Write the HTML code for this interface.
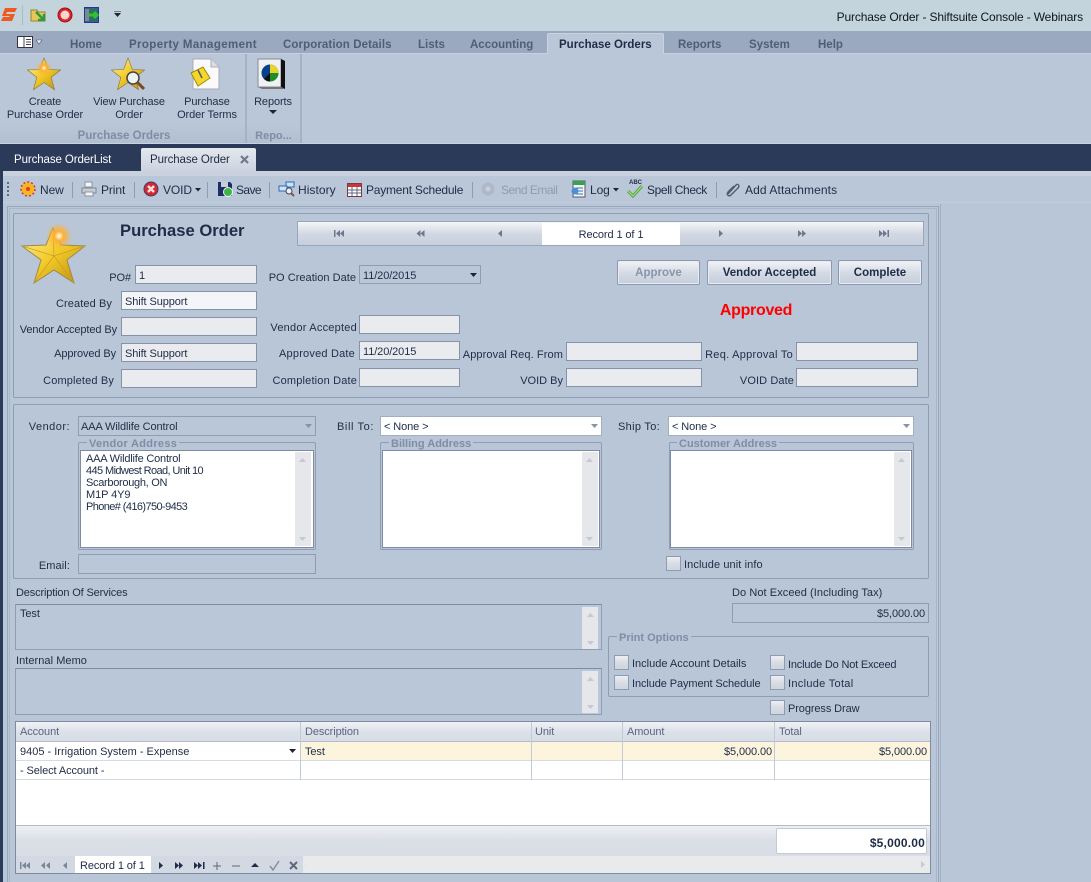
<!DOCTYPE html>
<html><head><meta charset="utf-8"><style>
html,body{margin:0;padding:0;width:1091px;height:882px;overflow:hidden;background:#b9c6d7}
body{position:relative;font:11px "Liberation Sans",sans-serif;letter-spacing:-.1px;color:#1f2c47}
div,span,svg{position:absolute;box-sizing:border-box}
.t{white-space:nowrap;line-height:14px;height:14px;margin-top:1px}
.r{text-align:right}.c{text-align:center}
.b{font-weight:bold}
.tb{color:#4f5d76;font-weight:bold;font-size:11.5px;letter-spacing:0}
.f{background:#e9ebef;border:1px solid #8592a8;padding:4px 3px 0;line-height:13px;white-space:nowrap}
.n{background:#bac7d8;border:1px solid #8f9cb2;padding:4px 3px 0;line-height:13px;white-space:nowrap}
.w{background:#fff;border:1px solid #a3aec0;padding:4px 3px 0;line-height:13px;white-space:nowrap}
.g{border:1px solid #8f9db3;border-radius:2px}
.cb{width:15px;height:15px;border:1px solid #8f9bb0;background:linear-gradient(#eceef2,#d9dde4 50%,#cfd5de)}
.btn{border:1px solid #8d99ae;border-radius:2px;background:linear-gradient(#f2f4f7,#d5dbe5 50%,#c5cedb);box-shadow:inset 0 0 0 1px #e8ecf1;text-align:center;font-weight:bold;font-size:11.5px;line-height:25px;letter-spacing:0}
.sb{background:#e5e7ea;width:16px}
.ga{font-weight:bold;color:#7f8ca5;background:#b9c6d7;padding:0 2px;letter-spacing:0}
.ln{background:#d7dbe5;width:1px}
.sep{width:1px;height:16px;top:182px;background:#8f9cb2}
.th{color:#5a6680;top:724px}
.rl{font-size:11px;letter-spacing:-.1px}
.tl{margin-top:0;font-size:12px}
</style></head><body>
<svg width="0" height="0" style="left:0;top:0"><defs>
<linearGradient id="st" x1="0" y1="0" x2="1" y2="1"><stop offset="0" stop-color="#fff2a0"/><stop offset=".5" stop-color="#f2c928"/><stop offset="1" stop-color="#b98c12"/></linearGradient>
<radialGradient id="gl"><stop offset="0" stop-color="#fff"/><stop offset=".35" stop-color="#ffb030"/><stop offset="1" stop-color="#ffb030" stop-opacity="0"/></radialGradient>
<symbol id="star" viewBox="0 0 100 100"><polygon points="50,3 63,37 99,38 71,60 81,96 50,75 19,96 29,60 1,38 37,37" fill="url(#st)" stroke="#8c7a3a" stroke-width="2"/></symbol>
</defs></svg>

<!-- title bar -->
<div style="left:0;top:0;width:1091px;height:31px;background:#c3d4dc"></div>
<svg style="left:1px;top:7px" width="16" height="16" viewBox="0 0 16 16"><path d="M4 1H16L14 5H6L5 7H14L11 14H0L2 10H8L9 9H1Z" fill="#ee5a22"/></svg>
<div style="left:22px;top:6px;width:1px;height:19px;background:#a9bac4"></div>
<svg style="left:30px;top:7px" width="18" height="16" viewBox="0 0 18 16"><path d="M1 3H7L8 5H15V14H1Z" fill="#e8c65a" stroke="#9c8030"/><path d="M6 5L14 13M14 7V13H8" fill="none" stroke="#2f9a3a" stroke-width="2.500"/></svg>
<svg style="left:57px;top:7px" width="16" height="16" viewBox="0 0 16 16"><circle cx="8" cy="8" r="7" fill="#d22" stroke="#912"/><circle cx="8" cy="8" r="4.500" fill="#f4d8d0"/></svg>
<svg style="left:84px;top:7px" width="15" height="16" viewBox="0 0 15 16"><rect x=".5" y=".5" width="14" height="15" fill="#2f6b68" stroke="#2333a0"/><rect x="1" y="2" width="4" height="12" fill="#7a8a90"/><path d="M5 8H13M10 5L13 8L10 11" fill="none" stroke="#2ec22e" stroke-width="3"/></svg>
<svg style="left:113px;top:11px" width="9" height="7" viewBox="0 0 9 7"><path d="M1 0H8" stroke="#223"/><path d="M1 2H8L4.500 6Z" fill="#223"/></svg>
<div class="t r" style="right:8px;top:9px;color:#10151f;font-size:12px;letter-spacing:-.15px">Purchase Order - Shiftsuite Console - Webinars</div>

<!-- ribbon tabs -->
<div style="left:0;top:31px;width:1091px;height:22px;background:#9aa9c0"></div>
<div style="left:0;top:53px;width:1091px;height:1px;background:#c6d0de"></div>
<svg style="left:17px;top:36px" width="26" height="13" viewBox="0 0 26 13"><rect x=".5" y=".5" width="15" height="11" fill="#fff" stroke="#334"/><path d="M7 1V11M9 3.500H14M9 6H14M9 8.500H14" stroke="#445" fill="none"/><path d="M19 4H25L22 8Z" fill="#eef" stroke="#556" stroke-width=".6"/></svg>
<div class="t tb" style="left:70px;top:37px">Home</div>
<div class="t tb" style="left:129px;top:37px;letter-spacing:.38px">Property Management</div>
<div class="t tb" style="left:283px;top:37px;letter-spacing:.1px">Corporation Details</div>
<div class="t tb" style="left:418px;top:37px">Lists</div>
<div class="t tb" style="left:470px;top:37px">Accounting</div>
<div style="left:547px;top:33px;width:117px;height:21px;background:#bac7d8;border:1px solid #c8d2e0;border-bottom:0;border-radius:2px 2px 0 0"></div>
<div class="t tb" style="left:559px;top:37px;color:#1f2c47">Purchase Orders</div>
<div class="t tb" style="left:678px;top:37px">Reports</div>
<div class="t tb" style="left:749px;top:37px">System</div>
<div class="t tb" style="left:818px;top:37px">Help</div>

<!-- ribbon -->
<div style="left:0;top:54px;width:1091px;height:89px;background:#bac7d8"></div>
<div style="left:0;top:126px;width:245px;height:17px;background:linear-gradient(#b9c6d7,#b1bfd1)"></div>
<div style="left:247px;top:126px;width:53px;height:17px;background:linear-gradient(#b9c6d7,#b1bfd1)"></div>
<div style="left:245px;top:54px;width:2px;height:89px;background:#a5b2c6"></div>
<div style="left:300px;top:54px;width:2px;height:89px;background:#a5b2c6"></div>
<svg style="left:27px;top:57px" width="34" height="34"><use href="#star" width="34" height="34"/><circle cx="17" cy="11" r="8" fill="url(#gl)"/></svg>
<svg style="left:111px;top:57px" width="34" height="34"><use href="#star" width="34" height="34"/><circle cx="22" cy="21" r="6" fill="#eef3f3" stroke="#444" stroke-width="1.500"/><path d="M26 25L33 32" stroke="#7a4a20" stroke-width="3"/></svg>
<svg style="left:190px;top:58px" width="30" height="33" viewBox="0 0 30 33"><path d="M3 1H21L29 9V31H3Z" fill="#fafafa" stroke="#aab"/><path d="M21 1V9H29" fill="#ddd" stroke="#aab"/><path d="M1 15L13 9L20 20L8 28Z" fill="#f4d728" stroke="#a08a10"/><path d="M8 12L12 20" stroke="#556" fill="none" stroke-width="1.500"/></svg>
<svg style="left:257px;top:58px" width="30" height="33" viewBox="0 0 30 33"><path d="M1 1H24V29H1Z" fill="#eef2f0" stroke="#889"/><path d="M24 1L28 3V31L24 29Z" fill="#111"/><path d="M1 29L5 31H28L24 29Z" fill="#777"/><circle cx="13" cy="15" r="8.500" fill="#0a3f8c"/><path d="M13 15V6.500A8.500 8.500 0 0 1 21.500 15Z" fill="#e7d428"/><path d="M13 15H21.500A8.500 8.500 0 0 1 13 23.500Z" fill="#1d8e2a"/><path d="M13 15V23.500A8.500 8.500 0 0 1 7 21Z" fill="#111"/></svg>
<div class="t c" style="left:0;top:94px;width:90px">Create</div>
<div class="t c" style="left:0;top:107px;width:90px">Purchase Order</div>
<div class="t c" style="left:84px;top:94px;width:90px">View Purchase</div>
<div class="t c" style="left:84px;top:107px;width:90px">Order</div>
<div class="t c" style="left:162px;top:94px;width:90px">Purchase</div>
<div class="t c" style="left:162px;top:107px;width:90px">Order Terms</div>
<div class="t c" style="left:248px;top:94px;width:50px">Reports</div>
<svg style="left:269px;top:110px" width="8" height="5"><path d="M0 0H8L4 4Z" fill="#223"/></svg>
<div class="t c b" style="left:0;top:128px;width:248px;color:#7f8ca5;letter-spacing:0;font-size:11.500px">Purchase Orders</div>
<div class="t c b" style="left:247px;top:128px;width:53px;color:#7f8ca5;letter-spacing:0">Repo...</div>

<!-- dark doc tab bar -->
<div style="left:0;top:143px;width:1091px;height:1px;background:#c9d2de"></div>
<div style="left:0;top:144px;width:1091px;height:27px;background:#2b3a58"></div>
<div class="t" style="left:14px;top:152px;color:#fff;font-size:11.500px">Purchase OrderList</div>
<div style="left:141px;top:148px;width:115px;height:24px;background:linear-gradient(#e4e8ee,#cbd2df);border-radius:2px 2px 0 0"></div>
<div class="t" style="left:150px;top:152px;font-size:11.500px">Purchase Order</div>
<svg style="left:240px;top:155px" width="9" height="9"><path d="M1 1L8 8M8 1L1 8" stroke="#707a8c" stroke-width="2.200"/></svg>

<!-- toolbar -->
<div style="left:0;top:171px;width:3px;height:711px;background:#2b3a58"></div>
<div style="left:3px;top:171px;width:1088px;height:5px;background:#c9d1df"></div>
<div style="left:3px;top:176px;width:1088px;height:27px;background:#bac7d8;border-bottom:1px solid #c3cedc"></div>
<div style="left:7px;top:182px;width:2px;height:15px;background:repeating-linear-gradient(#5d6a82 0 2px,transparent 2px 4px)"></div>
<svg style="left:20px;top:181px" width="16" height="16" viewBox="0 0 16 16"><circle cx="8" cy="8" r="6.500" fill="#f3b81f"/><circle cx="8" cy="8" r="7" fill="none" stroke="#d33" stroke-width="1.500" stroke-dasharray="2 2"/><circle cx="8" cy="8" r="2" fill="#e33"/></svg>
<div class="t tl" style="left:40px;top:183px">New</div>
<div class="sep" style="left:72px"></div>
<svg style="left:81px;top:181px" width="16" height="16" viewBox="0 0 16 16"><path d="M4 1H11V6H4Z" fill="#f5f5f5" stroke="#8a95a8"/><path d="M1 7H15V12H1Z" fill="#c8ccd4" stroke="#7d8799"/><path d="M4 11H12V15H4Z" fill="#f5f5f5" stroke="#8a95a8"/></svg>
<div class="t tl" style="left:101px;top:183px">Print</div>
<div class="sep" style="left:134px"></div>
<svg style="left:143px;top:181px" width="16" height="16" viewBox="0 0 16 16"><circle cx="8" cy="8" r="7" fill="#d62828" stroke="#3a3a80"/><path d="M5 5L11 11M11 5L5 11" stroke="#f6dede" stroke-width="2.500"/></svg>
<div class="t tl" style="left:163px;top:183px">VOID</div>
<svg style="left:195px;top:188px" width="6" height="4"><path d="M0 0H6L3 3.500Z" fill="#223"/></svg>
<div class="sep" style="left:207px"></div>
<svg style="left:217px;top:181px" width="16" height="16" viewBox="0 0 16 16"><path d="M1 1H13L15 3V15H1Z" fill="#1e2d66"/><rect x="4" y="1" width="7" height="5" fill="#c9ccd6"/><circle cx="11" cy="11" r="4.500" fill="#45b04a" stroke="#dfe"/></svg>
<div class="t tl" style="left:236px;top:183px;letter-spacing:-.6px">Save</div>
<div class="sep" style="left:269px"></div>
<svg style="left:278px;top:181px" width="17" height="16" viewBox="0 0 17 16"><rect x="8" y="1" width="8" height="5" fill="#cfe3f6" stroke="#2c69b5"/><rect x="1" y="5" width="8" height="5" fill="#cfe3f6" stroke="#2c69b5"/><circle cx="11" cy="10" r="3" fill="#eef" stroke="#445"/><path d="M13 12L16 15" stroke="#854" stroke-width="2"/></svg>
<div class="t tl" style="left:298px;top:183px;letter-spacing:.05px">History</div>
<svg style="left:347px;top:182px" width="15" height="15" viewBox="0 0 15 15"><rect x=".5" y="1.500" width="14" height="13" fill="#fff" stroke="#7a3a40"/><rect x="1" y="2" width="13" height="3" fill="#c9383c"/><path d="M1 8H14M1 11H14M5 5V14M10 5V14" stroke="#5a6a8c"/></svg>
<div class="t tl" style="left:366px;top:183px;letter-spacing:-.22px">Payment Schedule</div>
<div class="sep" style="left:472px"></div>
<svg style="left:480px;top:181px" width="16" height="16" viewBox="0 0 16 16"><circle cx="8" cy="8" r="6.500" fill="#aeb8c7"/><circle cx="8" cy="8" r="2.500" fill="#c5cedb"/></svg>
<div class="t tl" style="left:501px;top:183px;color:#8f9bb0;letter-spacing:-.5px">Send Email</div>
<svg style="left:570px;top:180px" width="17" height="18" viewBox="0 0 17 18"><rect x="3" y="1" width="12" height="16" fill="#f4f8f4" stroke="#557"/><rect x="3" y="1" width="12" height="4" fill="#3aa24a"/><path d="M6 8H13M6 11H13M6 14H13" stroke="#3a6ea8"/><circle cx="5" cy="11" r="3.500" fill="#4a8fd8"/></svg>
<div class="t tl" style="left:590px;top:183px">Log</div>
<svg style="left:613px;top:188px" width="6" height="4"><path d="M0 0H6L3 3.500Z" fill="#223"/></svg>
<svg style="left:627px;top:180px" width="16" height="18" viewBox="0 0 16 18"><path d="M1 11L6 16L15 6" fill="none" stroke="#4aa53a" stroke-width="3"/><path d="M1 11L6 16L15 6" fill="none" stroke="#b5e08f" stroke-width="1"/></svg>
<span class="b" style="left:629px;top:180px;font-size:6px;letter-spacing:0;line-height:7px">ABC</span>
<div class="t tl" style="left:647px;top:183px;letter-spacing:-.38px">Spell Check</div>
<div class="sep" style="left:716px"></div>
<svg style="left:725px;top:182px" width="15" height="15" viewBox="0 0 15 15"><path d="M3 12L11 3C13 1 15 4 13 6L6 13C4 15 1 13 3 10L9 4" fill="none" stroke="#4f5d70" stroke-width="1.400"/></svg>
<div class="t tl" style="left:745px;top:183px;letter-spacing:.1px">Add Attachments</div>

<!-- outer panel -->
<div style="left:7px;top:206px;width:932px;height:676px;border:1px solid #98a6bc;border-bottom:0"></div>
<div style="left:940px;top:204px;width:1px;height:678px;background:#a0adc2"></div>
<div style="left:9px;top:208px;width:928px;height:674px;border:1px solid #aab6c9;border-bottom:0"></div>

<!-- header group -->
<div class="g" style="left:13px;top:213px;width:916px;height:185px"></div>
<svg style="left:21px;top:220px" width="66" height="66" viewBox="0 0 66 66"><polygon points="32,8 40,25 64,26 46,40 53,63 33,50 13,63 20,40 1,26 25,25" fill="url(#st)" stroke="#9c8a4a"/><path d="M32 8L33 36L64 26M33 36L53 63M33 36L13 63M33 36L1 26" stroke="#c99f20" fill="none" stroke-width=".7"/><circle cx="38" cy="16" r="13" fill="url(#gl)"/></svg>
<div class="t b" style="left:120px;top:221px;font-size:16.600px;line-height:18px;height:18px;letter-spacing:0">Purchase Order</div>

<!-- record nav -->
<div style="left:297px;top:221px;width:627px;height:25px;border:1px solid #98a5ba;background:linear-gradient(#f4f6f8,#d3d9e3 50%,#c7cfdc)"></div>
<div style="left:542px;top:223px;width:138px;height:22px;background:#fff"></div>
<div class="t c" style="left:542px;top:227px;width:138px">Record 1 of 1</div>
<svg style="left:334px;top:230px" width="10" height="7" fill="#6d788c"><rect width="1.500" height="7"/><path d="M6 0V7L2 3.500ZM10 0V7L6 3.500Z"/></svg>
<svg style="left:416px;top:230px" width="9" height="7" fill="#6d788c"><path d="M4.500 0V7L.5 3.500ZM8.500 0V7L4.500 3.500Z"/></svg>
<svg style="left:498px;top:230px" width="5" height="7" fill="#6d788c"><path d="M4 0V7L0 3.500Z"/></svg>
<svg style="left:719px;top:230px" width="5" height="7" fill="#6d788c"><path d="M0 0V7L4 3.500Z"/></svg>
<svg style="left:798px;top:230px" width="9" height="7" fill="#6d788c"><path d="M0 0V7L4 3.500ZM4 0V7L8 3.500Z"/></svg>
<svg style="left:879px;top:230px" width="10" height="7" fill="#6d788c"><path d="M0 0V7L4 3.500ZM4 0V7L8 3.500Z"/><rect x="8.500" width="1.500" height="7"/></svg>

<!-- left fields -->
<div class="t r" style="left:60px;top:270px;width:71px">PO#</div>
<div class="f" style="left:135px;top:265px;width:122px;height:19px">1</div>
<div class="t r" style="left:20px;top:296px;width:92px;letter-spacing:.1px">Created By</div>
<div class="f" style="left:121px;top:291px;width:136px;height:19px;background:#f4f5f8">Shift Support</div>
<div class="t r" style="left:0;top:322px;width:117px">Vendor Accepted By</div>
<div class="f" style="left:121px;top:317px;width:136px;height:19px"></div>
<div class="t r" style="left:20px;top:346px;width:96px">Approved By</div>
<div class="f" style="left:121px;top:343px;width:136px;height:19px">Shift Support</div>
<div class="t r" style="left:20px;top:373px;width:94px;letter-spacing:.15px">Completed By</div>
<div class="f" style="left:121px;top:369px;width:136px;height:19px"></div>
<!-- mid fields -->
<div class="t r" style="left:250px;top:270px;width:106px;letter-spacing:.03px">PO Creation Date</div>
<div class="n" style="left:359px;top:265px;width:122px;height:19px">11/20/2015</div>
<svg style="left:470px;top:273px" width="8" height="4"><path d="M0 0H7L3.500 4Z" fill="#223"/></svg>
<div class="t r" style="left:250px;top:320px;width:107px;letter-spacing:.23px">Vendor Accepted</div>
<div class="f" style="left:359px;top:315px;width:101px;height:19px"></div>
<div class="t r" style="left:250px;top:346px;width:105px;letter-spacing:.2px">Approved Date</div>
<div class="f" style="left:359px;top:341px;width:101px;height:19px">11/20/2015</div>
<div class="t r" style="left:250px;top:373px;width:107px;letter-spacing:.17px">Completion Date</div>
<div class="f" style="left:359px;top:368px;width:101px;height:19px"></div>
<!-- right fields -->
<div class="t r" style="left:440px;top:347px;width:123px;letter-spacing:.1px">Approval Req. From</div>
<div class="f" style="left:566px;top:342px;width:136px;height:19px"></div>
<div class="t r" style="left:690px;top:347px;width:103px;letter-spacing:.27px">Req. Approval To</div>
<div class="f" style="left:796px;top:342px;width:122px;height:19px"></div>
<div class="t r" style="left:480px;top:373px;width:83px;letter-spacing:0">VOID By</div>
<div class="f" style="left:566px;top:368px;width:136px;height:19px"></div>
<div class="t r" style="left:700px;top:373px;width:94px;letter-spacing:.1px">VOID Date</div>
<div class="f" style="left:796px;top:368px;width:122px;height:19px"></div>
<!-- buttons -->
<div class="btn" style="left:617px;top:260px;width:83px;height:25px;color:#8a95aa">Approve</div>
<div class="btn" style="left:707px;top:260px;width:125px;height:25px">Vendor Accepted</div>
<div class="btn" style="left:838px;top:260px;width:84px;height:25px">Complete</div>
<div class="t c b" style="left:680px;top:301px;width:152px;height:18px;line-height:18px;color:#f00;font-size:16px;letter-spacing:-.3px">Approved</div>

<!-- address group -->
<div class="g" style="left:13px;top:404px;width:916px;height:175px"></div>
<div class="t r" style="left:20px;top:419px;width:50px;letter-spacing:.47px">Vendor:</div>
<div class="n" style="left:78px;top:416px;width:238px;height:20px;padding-left:2px">AAA Wildlife Control</div>
<svg style="left:305px;top:424px" width="8" height="4"><path d="M0 0H7L3.500 4Z" fill="#8593a8"/></svg>
<div class="g" style="left:78px;top:442px;width:238px;height:108px"></div>
<div class="t ga" style="left:87px;top:436px;letter-spacing:.3px">Vendor Address</div>
<div style="left:80px;top:450px;width:234px;height:98px;background:#fff;border:1px solid #7f8ba0"></div>
<div class="sb" style="left:295px;top:452px;height:94px"></div>
<div class="t" style="left:86px;top:451px;letter-spacing:-.2px">AAA Wildlife Control</div>
<div class="t" style="left:86px;top:463px;letter-spacing:-.6px">445 Midwest Road, Unit 10</div>
<div class="t" style="left:86px;top:475px;letter-spacing:-.3px">Scarborough, ON</div>
<div class="t" style="left:86px;top:487px">M1P 4Y9</div>
<div class="t" style="left:86px;top:499px;letter-spacing:-.6px">Phone# (416)750-9453</div>
<div class="t r" style="left:20px;top:558px;width:50px;letter-spacing:.1px">Email:</div>
<div class="n" style="left:78px;top:554px;width:238px;height:20px"></div>

<div class="t r" style="left:320px;top:419px;width:54px;letter-spacing:.6px">Bill To:</div>
<div class="w" style="left:380px;top:416px;width:222px;height:20px">&lt; None &gt;</div>
<svg style="left:591px;top:424px" width="8" height="4"><path d="M0 0H7L3.500 4Z" fill="#8593a8"/></svg>
<div class="g" style="left:380px;top:442px;width:222px;height:108px"></div>
<div class="t ga" style="left:389px;top:436px">Billing Address</div>
<div style="left:382px;top:450px;width:218px;height:98px;background:#fff;border:1px solid #7f8ba0"></div>
<div class="sb" style="left:582px;top:452px;height:94px"></div>

<div class="t r" style="left:610px;top:419px;width:50px;letter-spacing:.3px">Ship To:</div>
<div class="w" style="left:668px;top:416px;width:246px;height:20px">&lt; None &gt;</div>
<svg style="left:903px;top:424px" width="8" height="4"><path d="M0 0H7L3.500 4Z" fill="#8593a8"/></svg>
<div class="g" style="left:669px;top:442px;width:245px;height:108px"></div>
<div class="t ga" style="left:677px;top:436px">Customer Address</div>
<div style="left:670px;top:450px;width:242px;height:98px;background:#fff;border:1px solid #7f8ba0"></div>
<div class="sb" style="left:894px;top:452px;height:94px"></div>

<svg style="left:298px;top:457px" width="10" height="86" fill="#c5cad2"><path d="M1 5L4.500 1L8 5Z"/><path d="M1 80H8L4.500 84Z"/></svg>
<svg style="left:585px;top:457px" width="10" height="86" fill="#c5cad2"><path d="M1 5L4.500 1L8 5Z"/><path d="M1 80H8L4.500 84Z"/></svg>
<svg style="left:897px;top:457px" width="10" height="86" fill="#c5cad2"><path d="M1 5L4.500 1L8 5Z"/><path d="M1 80H8L4.500 84Z"/></svg>

<div class="cb" style="left:666px;top:556px"></div>
<div class="t" style="left:684px;top:557px;letter-spacing:.1px">Include unit info</div>

<!-- description -->
<div class="t" style="left:16px;top:585px;letter-spacing:-.15px">Description Of Services</div>
<div class="n" style="left:15px;top:604px;width:587px;height:46px;border-top-color:#7f8ba0;padding:3px 4px 0">Test</div>
<div class="sb" style="left:582px;top:607px;height:42px"></div>
<div class="t" style="left:16px;top:653px;letter-spacing:.05px">Internal Memo</div>
<div class="n" style="left:15px;top:668px;width:587px;height:47px;border-top-color:#7f8ba0"></div>
<div class="sb" style="left:582px;top:671px;height:42px"></div>
<svg style="left:586px;top:612px" width="9" height="34" fill="#c5cad2"><path d="M1 5L4.500 1L8 5Z"/><path d="M1 29H8L4.500 33Z"/></svg>
<svg style="left:586px;top:676px" width="9" height="34" fill="#c5cad2"><path d="M1 5L4.500 1L8 5Z"/><path d="M1 29H8L4.500 33Z"/></svg>

<div class="t" style="left:732px;top:585px;letter-spacing:.07px">Do Not Exceed (Including Tax)</div>
<div class="n" style="left:732px;top:603px;width:197px;height:20px;text-align:right">$5,000.00</div>

<div class="g" style="left:608px;top:636px;width:321px;height:61px"></div>
<div class="t ga" style="left:617px;top:630px">Print Options</div>
<div class="cb" style="left:614px;top:655px"></div><div class="t" style="left:632px;top:656px;letter-spacing:0">Include Account Details</div>
<div class="cb" style="left:614px;top:675px"></div><div class="t" style="left:632px;top:676px">Include Payment Schedule</div>
<div class="cb" style="left:770px;top:655px"></div><div class="t" style="left:788px;top:657px;letter-spacing:-.2px">Include Do Not Exceed</div>
<div class="cb" style="left:770px;top:675px"></div><div class="t" style="left:788px;top:676px;letter-spacing:.3px">Include Total</div>
<div class="cb" style="left:770px;top:700px"></div><div class="t" style="left:788px;top:701px">Progress Draw</div>

<!-- grid -->
<div style="left:15px;top:721px;width:916px;height:153px;background:#fff;border:1px solid #7f8ba0"></div>
<div style="left:16px;top:722px;width:914px;height:20px;background:linear-gradient(#f0f2f5,#dde1e9 50%,#d8dce6);border-bottom:1px solid #b3bccb"></div>
<div style="left:301px;top:742px;width:629px;height:18px;background:#fdf4de"></div>
<div style="left:16px;top:760px;width:914px;height:1px;background:#d7dbe5"></div>
<div style="left:16px;top:779px;width:914px;height:1px;background:#d7dbe5"></div>
<div class="ln" style="left:300px;top:722px;height:58px;background:#c2cad8"></div>
<div class="ln" style="left:531px;top:722px;height:58px;background:#c2cad8"></div>
<div class="ln" style="left:622px;top:722px;height:58px;background:#c2cad8"></div>
<div class="ln" style="left:774px;top:722px;height:58px;background:#c2cad8"></div>
<div class="t th" style="left:20px">Account</div>
<div class="t th" style="left:305px">Description</div>
<div class="t th" style="left:535px">Unit</div>
<div class="t th" style="left:627px">Amount</div>
<div class="t th" style="left:779px">Total</div>
<div class="t" style="left:20px;top:744px;letter-spacing:0">9405 - Irrigation System - Expense</div>
<svg style="left:289px;top:749px" width="8" height="4"><path d="M0 0H7L3.500 4Z" fill="#223"/></svg>
<div class="t" style="left:305px;top:744px">Test</div>
<div class="t r" style="left:640px;top:744px;width:132px">$5,000.00</div>
<div class="t r" style="left:790px;top:744px;width:137px">$5,000.00</div>
<div class="t" style="left:20px;top:763px">- Select Account -</div>
<div style="left:16px;top:825px;width:914px;height:31px;background:linear-gradient(#eef0f3,#d9dee7 50%,#d8dde6);border-top:1px solid #b3bccb"></div>
<div style="left:776px;top:828px;width:151px;height:26px;background:#fff;border:1px solid #c3cad6;border-radius:2px"></div>
<div class="t r b" style="left:780px;top:835px;width:145px;font-size:12px;letter-spacing:.2px">$5,000.00</div>
<div style="left:16px;top:856px;width:914px;height:17px;background:#d3d9e3"></div>
<div style="left:303px;top:856px;width:627px;height:17px;background:#e9eaec"></div>
<div style="left:75px;top:856px;width:76px;height:17px;background:#fff"></div>
<div class="t" style="left:80px;top:858px">Record 1 of 1</div>
<svg style="left:16px;top:859px" width="290" height="13" viewBox="0 0 290 13">
<g fill="#79859a"><rect x="4" y="3" width="1.500" height="7"/><path d="M10 3V10L6 6.500ZM14 3V10L10 6.500Z"/><path d="M29 3V10L25 6.500ZM34 3V10L30 6.500Z"/><path d="M51 3V10L47 6.500Z"/></g>
<g fill="#1f2c47"><path d="M143 3V10L147 6.500Z"/><path d="M159 3V10L163 6.500ZM163 3V10L167 6.500Z"/><path d="M178 3V10L182 6.500ZM182 3V10L186 6.500Z"/><rect x="187" y="3" width="1.500" height="7"/><path d="M235 8L239 4L243 8Z"/></g>
<path d="M197 7H205M201 3V11M216 7H224" stroke="#5c687e" fill="none"/>
<path d="M254 7L257 11L263 2" stroke="#848fa3" stroke-width="1.500" fill="none"/>
<path d="M274 3L281 10M281 3L274 10" stroke="#5c687e" stroke-width="2" fill="none"/>
<path d="M293 3V10L289 6.500Z" fill="#c5cad2"/>
</svg>
<svg style="left:921px;top:861px" width="5" height="8"><path d="M0 0V7L4 3.500Z" fill="#c5cad2"/></svg>
</body></html>
